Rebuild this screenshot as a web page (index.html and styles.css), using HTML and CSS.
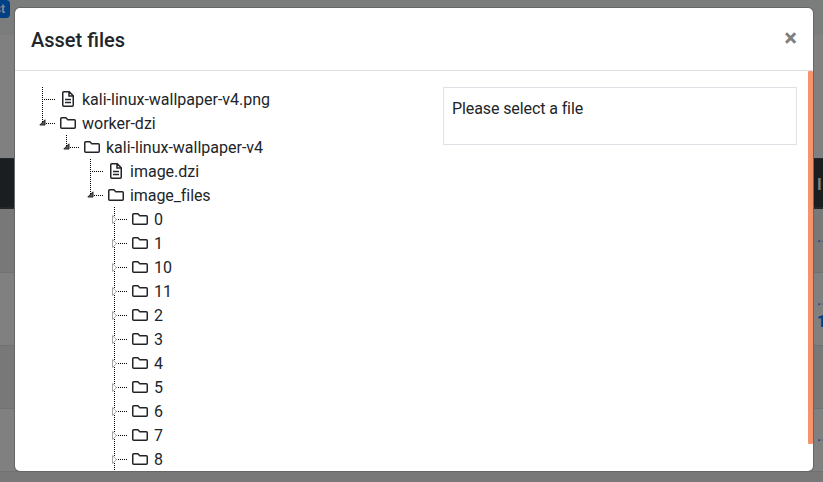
FILE: index.html
```
<!DOCTYPE html>
<html lang="en">
<head>
<meta charset="utf-8">
<title>Asset files</title>
<link rel="stylesheet" href="styles.css">
</head>
<body>
<svg class="sprite" aria-hidden="true">
  <symbol id="folder" viewBox="0 0 16 16"><path d="M1.75 2.75h4.1l2 2h6.4a1 1 0 0 1 1 1v6.5a1 1 0 0 1-1 1H1.75a1 1 0 0 1-1-1v-8.5a1 1 0 0 1 1-1z" fill="none" stroke="currentColor" stroke-width="1.5"/></symbol>
  <symbol id="file" viewBox="0 0 16 16"><path d="M3.75.75h5.5l4 4V14.25a1 1 0 0 1-1 1H3.75a1 1 0 0 1-1-1V1.75a1 1 0 0 1 1-1zM9 1v4h4M5 8.5h6M5 11.5h6" fill="none" stroke="currentColor" stroke-width="1.5"/></symbol>
  <symbol id="open" viewBox="0 0 7 7"><path d="M6 .8V6H.8z" fill="#595959" stroke="#262626"/></symbol>
  <symbol id="closed" viewBox="0 0 5 9"><path d="M.5.5v8l4-4z" fill="#fff" stroke="#a6a6a6"/></symbol>
</svg>
<div class="page">
  <div class="topbar"><span class="badge">st</span></div>
  <div class="spacer"></div>
  <div class="row head"><span class="cell">I</span></div>
  <div class="row odd"><span class="cell">...</span></div>
  <div class="row tall"><span class="cell">...<br><b>1</b></span></div>
  <div class="row odd"></div>
  <div class="row"><span class="cell">...</span></div>
  <div class="row odd last"></div>
</div>
<div class="modal" role="dialog">
  <div class="modal-header"><h5>Asset files</h5><button class="close">×</button></div>
  <div class="modal-body">
    <ul class="tree">
      <li><div class="node"><svg class="icon"><use href="#file"/></svg><span>kali-linux-wallpaper-v4.png</span></div></li>
      <li><div class="node"><svg class="open"><use href="#open"/></svg><svg class="icon"><use href="#folder"/></svg><span>worker-dzi</span></div>
        <ul>
          <li><div class="node"><svg class="open"><use href="#open"/></svg><svg class="icon"><use href="#folder"/></svg><span>kali-linux-wallpaper-v4</span></div>
            <ul>
              <li><div class="node"><svg class="icon"><use href="#file"/></svg><span>image.dzi</span></div></li>
              <li><div class="node"><svg class="open"><use href="#open"/></svg><svg class="icon"><use href="#folder"/></svg><span class="tight">image_files</span></div>
                <ul>
                  <li><div class="node"><svg class="closed"><use href="#closed"/></svg><svg class="icon"><use href="#folder"/></svg><span>0</span></div></li>
                  <li><div class="node"><svg class="closed"><use href="#closed"/></svg><svg class="icon"><use href="#folder"/></svg><span>1</span></div></li>
                  <li><div class="node"><svg class="closed"><use href="#closed"/></svg><svg class="icon"><use href="#folder"/></svg><span>10</span></div></li>
                  <li><div class="node"><svg class="closed"><use href="#closed"/></svg><svg class="icon"><use href="#folder"/></svg><span>11</span></div></li>
                  <li><div class="node"><svg class="closed"><use href="#closed"/></svg><svg class="icon"><use href="#folder"/></svg><span>2</span></div></li>
                  <li><div class="node"><svg class="closed"><use href="#closed"/></svg><svg class="icon"><use href="#folder"/></svg><span>3</span></div></li>
                  <li><div class="node"><svg class="closed"><use href="#closed"/></svg><svg class="icon"><use href="#folder"/></svg><span>4</span></div></li>
                  <li><div class="node"><svg class="closed"><use href="#closed"/></svg><svg class="icon"><use href="#folder"/></svg><span>5</span></div></li>
                  <li><div class="node"><svg class="closed"><use href="#closed"/></svg><svg class="icon"><use href="#folder"/></svg><span>6</span></div></li>
                  <li><div class="node"><svg class="closed"><use href="#closed"/></svg><svg class="icon"><use href="#folder"/></svg><span>7</span></div></li>
                  <li><div class="node"><svg class="closed"><use href="#closed"/></svg><svg class="icon"><use href="#folder"/></svg><span>8</span></div></li>
                  <li><div class="node"></div></li>
                </ul>
              </li>
            </ul>
          </li>
        </ul>
      </li>
    </ul>
    <div class="preview">Please select a file</div>
    <div class="thumb"></div>
  </div>
</div>
</body>
</html>
```
FILE: styles.css
```
* { box-sizing: border-box; }
html, body { height: 100%; }
body {
  margin: 0;
  overflow: hidden;
  font: 16px/24px Roboto, sans-serif;
  color: #212529;
  background: #808080;
}
.sprite { position: absolute; width: 0; height: 0; }

.page { height: 482px; overflow: hidden; }
.topbar { height: 35px; background: #7b7d7c; }
.badge {
  display: flex;
  justify-content: flex-end;
  width: 10px;
  height: 18px;
  padding-right: 5px;
  border-radius: 0 4px 4px 0;
  background: #004085;
  color: #7f8b98;
  font-size: 12px;
  font-weight: 700;
  line-height: 18px;
}
.spacer { height: 123px; }
.row {
  display: flex;
  justify-content: flex-end;
  align-items: center;
  height: 63px;
  padding-bottom: 8px;
  border-top: 1px solid #6f7172;
}
.row.tall { height: 73px; padding: 3px 0 0; }
.odd { background: #787878; }
.row.head {
  height: 51px;
  padding: 3px 0 0;
  background: #1a1e21;
  border-top: 1px solid #22272b;
  border-bottom: 2px solid #22272b;
  font-weight: 700;
}
.row.head + .row { border-top: 0; }
.cell { width: 6px; white-space: nowrap; color: #004080; line-height: 22px; }
.head .cell { color: #808080; }

.modal {
  position: absolute;
  left: 15px;
  top: 8px;
  display: flex;
  flex-direction: column;
  width: 798px;
  height: 463px;
  overflow: hidden;
  border-radius: 5px;
  background: #fff;
  box-shadow: 0 0 0 1px #666;
}
.modal-header {
  display: flex;
  flex: none;
  justify-content: space-between;
  align-items: center;
  height: 63px;
  padding: 1px 16px 0;
  border-bottom: 1px solid #dee2e6;
}
h5 { margin: 0; font-size: 20px; font-weight: 500; line-height: 30px; }
.close {
  padding: 0;
  border: 0;
  background: none;
  color: #7f7f7f;
  font: 700 24px/24px Roboto, sans-serif;
  margin-top: -4px;
}
.modal-body {
  display: flex;
  flex: 1;
  min-height: 0;
  align-items: flex-start;
  padding-top: 16px;
}
.tree { width: 412px; margin-left: 16px; }
ul { margin: 0; padding: 0; list-style: none; }
ul ul { margin-left: 24px; }
li {
  background: repeating-linear-gradient(#000 0 1px, transparent 1px 2px) 11px 0 / 1px 100% no-repeat;
}
.tree > li:last-child, ul ul > li:last-child { background-size: 1px 12px; }
.node {
  display: flex;
  position: relative;
  align-items: center;
  height: 24px;
  padding-left: 29px;
  white-space: nowrap;
  background: repeating-linear-gradient(90deg, #000 0 1px, transparent 1px 2px) 11px 12px / 13px 1px no-repeat;
}
.node:empty { background: none; }
.node span { padding-top: 2px; }
.tight { letter-spacing: -.08px; }
.icon { flex: none; width: 16px; height: 16px; margin-right: 6px; }
.open { position: absolute; left: 8px; top: 8px; width: 7px; height: 7px; }
.closed { position: absolute; left: 9px; top: 8px; width: 5px; height: 9px; }
.preview {
  width: 354px;
  height: 58px;
  padding: 8px;
  border: 1px solid #dee2e6;
  line-height: 26px;
  letter-spacing: -.1px;
}
.thumb { width: 5px; height: 373px; margin: -16px 0 0 11px; background: #f5946c; border-radius: 1px; }
```
